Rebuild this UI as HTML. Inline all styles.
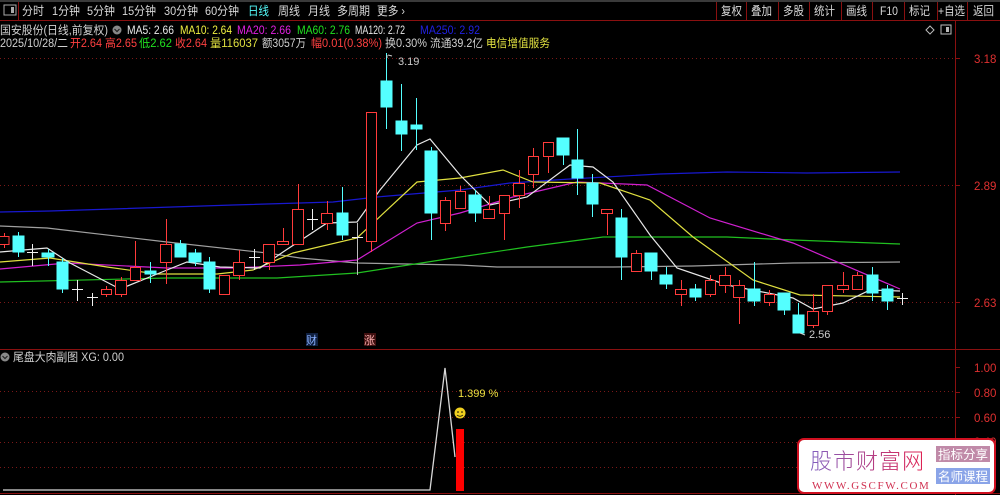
<!DOCTYPE html>
<html><head><meta charset="utf-8"><style>
html,body{margin:0;padding:0;background:#000;width:1000px;height:495px;overflow:hidden;font-family:"Liberation Sans","Noto Sans CJK SC",sans-serif}
</style></head><body>
<div style="position:absolute;left:0;top:0;width:1000px;height:495px">
<svg width="1000" height="495" style="position:absolute;left:0;top:0" font-family="Liberation Sans, Noto Sans CJK SC, sans-serif">
<!-- toolbar -->
<rect x="0" y="0" width="1000" height="2" fill="#3a3a3a"/>
<line x1="0" y1="20.5" x2="1000" y2="20.5" stroke="#8a1010"/>
<rect x="4" y="5" width="12" height="10" fill="none" stroke="#aaa"/><rect x="11" y="7" width="3" height="6" fill="#aaa"/>
<line x1="18.5" y1="2" x2="18.5" y2="20" stroke="#8a1010"/>
<g font-size="12" fill="#d8d8d8" lengthAdjust="spacingAndGlyphs">
<text x="22" y="15" textLength="22" lengthAdjust="spacingAndGlyphs">分时</text><text x="52" y="15" textLength="28" lengthAdjust="spacingAndGlyphs">1分钟</text><text x="87" y="15" textLength="28" lengthAdjust="spacingAndGlyphs">5分钟</text><text x="122" y="15" textLength="34" lengthAdjust="spacingAndGlyphs">15分钟</text><text x="164" y="15" textLength="34" lengthAdjust="spacingAndGlyphs">30分钟</text><text x="205" y="15" textLength="34" lengthAdjust="spacingAndGlyphs">60分钟</text><text x="248" y="15" fill="#5ff" textLength="21" lengthAdjust="spacingAndGlyphs">日线</text><text x="278" y="15" textLength="22" lengthAdjust="spacingAndGlyphs">周线</text><text x="308" y="15" textLength="22" lengthAdjust="spacingAndGlyphs">月线</text><text x="337" y="15" textLength="33" lengthAdjust="spacingAndGlyphs">多周期</text><text x="377" y="15" textLength="28" lengthAdjust="spacingAndGlyphs">更多 ›</text>
<text x="721" y="15" textLength="21" lengthAdjust="spacingAndGlyphs">复权</text><text x="751" y="15" textLength="21" lengthAdjust="spacingAndGlyphs">叠加</text><text x="783" y="15" textLength="21" lengthAdjust="spacingAndGlyphs">多股</text><text x="814" y="15" textLength="21" lengthAdjust="spacingAndGlyphs">统计</text><text x="846" y="15" textLength="21" lengthAdjust="spacingAndGlyphs">画线</text><text x="880" y="15" textLength="18" lengthAdjust="spacingAndGlyphs">F10</text><text x="909" y="15" textLength="21" lengthAdjust="spacingAndGlyphs">标记</text><text x="938" y="15" textLength="27" lengthAdjust="spacingAndGlyphs">+自选</text><text x="973" y="15" textLength="21" lengthAdjust="spacingAndGlyphs">返回</text>
</g>
<g stroke="#8a1010"><line x1="716.5" y1="2" x2="716.5" y2="20"/><line x1="746.5" y1="2" x2="746.5" y2="20"/><line x1="778.5" y1="2" x2="778.5" y2="20"/><line x1="809.5" y1="2" x2="809.5" y2="20"/><line x1="841.5" y1="2" x2="841.5" y2="20"/><line x1="872.5" y1="2" x2="872.5" y2="20"/><line x1="904.5" y1="2" x2="904.5" y2="20"/><line x1="937.5" y1="2" x2="937.5" y2="20"/><line x1="967.5" y1="2" x2="967.5" y2="20"/></g>
<!-- header -->
<g font-size="11.5">
<text x="0" y="34" fill="#d0d0d0" textLength="108" lengthAdjust="spacingAndGlyphs">国安股份(日线,前复权)</text>
<circle cx="117" cy="30" r="4.5" fill="#888"/><path d="M114.5 29 L117 31.5 L119.5 29" stroke="#222" fill="none" stroke-width="1.2"/>
<text x="127" y="34" fill="#e8e8e8" textLength="47" lengthAdjust="spacingAndGlyphs">MA5: 2.66</text><text x="180" y="34" fill="#f0f040" textLength="52" lengthAdjust="spacingAndGlyphs">MA10: 2.64</text><text x="237" y="34" fill="#e020e0" textLength="54" lengthAdjust="spacingAndGlyphs">MA20: 2.66</text><text x="297" y="34" fill="#20e020" textLength="53" lengthAdjust="spacingAndGlyphs">MA60: 2.76</text><text x="355" y="34" fill="#e8e8e8" textLength="50" lengthAdjust="spacingAndGlyphs">MA120: 2.72</text><text x="420" y="34" fill="#2020e0" textLength="60" lengthAdjust="spacingAndGlyphs">MA250: 2.92</text>
<text x="0" y="47" fill="#d0d0d0" textLength="68" lengthAdjust="spacingAndGlyphs">2025/10/28/二</text>
<text x="70" y="47" fill="#ff4040" textLength="32" lengthAdjust="spacingAndGlyphs">开2.64</text><text x="105" y="47" fill="#ff4040" textLength="32" lengthAdjust="spacingAndGlyphs">高2.65</text><text x="139" y="47" fill="#20e020" textLength="33" lengthAdjust="spacingAndGlyphs">低2.62</text><text x="175" y="47" fill="#ff4040" textLength="32" lengthAdjust="spacingAndGlyphs">收2.64</text><text x="210" y="47" fill="#e0e040" textLength="48" lengthAdjust="spacingAndGlyphs">量116037</text><text x="262" y="47" fill="#d0d0d0" textLength="44" lengthAdjust="spacingAndGlyphs">额3057万</text><text x="311" y="47" fill="#ff4040" textLength="71" lengthAdjust="spacingAndGlyphs">幅0.01(0.38%)</text><text x="385" y="47" fill="#d0d0d0" textLength="42" lengthAdjust="spacingAndGlyphs">换0.30%</text><text x="430" y="47" fill="#d0d0d0" textLength="53" lengthAdjust="spacingAndGlyphs">流通39.2亿</text><text x="486" y="47" fill="#e0e040" textLength="64" lengthAdjust="spacingAndGlyphs">电信增值服务</text>
</g>
<path d="M926 30 L930 26 L934 30 L930 34 Z" fill="none" stroke="#bbb"/>
<rect x="941" y="25" width="10" height="9" fill="none" stroke="#bbb"/><rect x="946" y="27" width="3" height="5" fill="#bbb"/>
<!-- axes -->
<line x1="955.5" y1="21" x2="955.5" y2="495" stroke="#8a1010"/>
<line x1="0" y1="349.5" x2="1000" y2="349.5" stroke="#8a1010"/>
<g stroke="#7a1818" stroke-dasharray="1,3">
<line x1="0" y1="58.5" x2="955" y2="58.5"/><line x1="0" y1="185.5" x2="955" y2="185.5"/><line x1="0" y1="302.5" x2="955" y2="302.5"/>
<line x1="0" y1="391.5" x2="955" y2="391.5"/><line x1="0" y1="417.5" x2="955" y2="417.5"/><line x1="0" y1="442.5" x2="955" y2="442.5"/><line x1="0" y1="467.5" x2="955" y2="467.5"/>
</g>
<g stroke="#8a1010"><line x1="955" y1="58.5" x2="960" y2="58.5"/><line x1="955" y1="185.5" x2="960" y2="185.5"/><line x1="955" y1="302.5" x2="960" y2="302.5"/><line x1="955" y1="367.5" x2="960" y2="367.5"/><line x1="955" y1="392.5" x2="960" y2="392.5"/><line x1="955" y1="417.5" x2="960" y2="417.5"/><line x1="955" y1="441.5" x2="960" y2="441.5"/></g>
<g font-size="11.5" fill="#e03030"><text x="974" y="63">3.18</text><text x="974" y="190">2.89</text><text x="974" y="307">2.63</text><text x="974" y="372">1.00</text><text x="974" y="397">0.80</text><text x="974" y="422">0.60</text><text x="974" y="446">0.40</text></g>
<!-- MAs -->
<g fill="none" stroke-width="1.2">
<polyline stroke="#1818d0" points="0,212 50,211 113,209 233,205 333,202 377,197 460,190 510,183 570,179 660,174 727,172 807,173 900,172"/>
<polyline stroke="#a0a0a0" points="0,226 47,228 167,242 267,253 300,258 357,263 460,265 497,267 613,267 693,266 793,263 900,262"/>
<polyline stroke="#20c020" points="0,282 167,278 277,278 357,273 460,257 527,247 603,237 727,237 793,240 900,244"/>
<polyline stroke="#d020d0" points="0,269 67,263 167,268 233,268 300,265 357,260 417,223 460,213 513,197 577,182 647,185 710,218 793,243 900,289"/>
<polyline stroke="#e0e040" points="0,262 50,258 107,267 157,274 217,274 253,270 293,253 357,238 417,182 460,178 503,170 533,182 600,183 650,200 693,237 753,280 800,295 900,297"/>
<polyline stroke="#e8e8e8" points="0,252 47,248 70,263 120,289 167,270 187,262 220,267 260,268 283,252 327,223 357,222 380,190 417,145 430,139 460,175 490,205 527,197 570,165 593,167 613,182 650,235 677,268 727,285 793,298 813,309 843,303 870,290 900,291"/>
</g>
<!-- candles -->
<g stroke="#ff3b3b" fill="#000">
<line x1="4.5" y1="233" x2="4.5" y2="248"/><rect x="-1" y="236.5" width="10" height="8"/>
<line x1="106.5" y1="286" x2="106.5" y2="297"/><rect x="101.5" y="289.5" width="10" height="5"/>
<line x1="121.5" y1="277" x2="121.5" y2="297"/><rect x="115.5" y="280.5" width="11" height="14"/>
<line x1="135.5" y1="241" x2="135.5" y2="280"/><rect x="130.5" y="267.5" width="10" height="13"/>
<line x1="166.5" y1="219" x2="166.5" y2="284"/><rect x="160.5" y="244.5" width="11" height="18"/>
<rect x="219.5" y="275.5" width="10" height="19"/>
<line x1="239.5" y1="250" x2="239.5" y2="280"/><rect x="233.5" y="262.5" width="11" height="13"/>
<line x1="269.5" y1="244" x2="269.5" y2="270"/><rect x="263.5" y="244.5" width="11" height="18"/>
<line x1="283.5" y1="228" x2="283.5" y2="244"/><rect x="277.5" y="241.5" width="11" height="3"/>
<line x1="298.5" y1="184" x2="298.5" y2="244"/><rect x="292.5" y="209.5" width="11" height="35"/>
<line x1="327.5" y1="201" x2="327.5" y2="230"/><rect x="321.5" y="213.5" width="11" height="10"/>
<line x1="371.5" y1="112" x2="371.5" y2="252"/><rect x="366.5" y="112.5" width="10" height="129"/>
<line x1="445.5" y1="197" x2="445.5" y2="231"/><rect x="440.5" y="200.5" width="10" height="23"/>
<line x1="460.5" y1="186" x2="460.5" y2="208"/><rect x="455.5" y="191.5" width="10" height="17"/>
<line x1="489.5" y1="196" x2="489.5" y2="218"/><rect x="483.5" y="209.5" width="11" height="9"/>
<line x1="504.5" y1="195" x2="504.5" y2="240"/><rect x="499.5" y="195.5" width="10" height="18"/>
<line x1="519.5" y1="170" x2="519.5" y2="208"/><rect x="513.5" y="183.5" width="11" height="12"/>
<line x1="533.5" y1="148" x2="533.5" y2="188"/><rect x="528.5" y="156.5" width="10" height="18"/>
<line x1="548.5" y1="142" x2="548.5" y2="173"/><rect x="543.5" y="142.5" width="10" height="14"/>
<line x1="607.5" y1="209" x2="607.5" y2="235"/><rect x="601.5" y="209.5" width="11" height="4"/>
<line x1="636.5" y1="250" x2="636.5" y2="271"/><rect x="631.5" y="253.5" width="10" height="18"/>
<line x1="681.5" y1="280" x2="681.5" y2="306"/><rect x="675.5" y="289.5" width="11" height="5"/>
<line x1="710.5" y1="275" x2="710.5" y2="297"/><rect x="705.5" y="280.5" width="10" height="14"/>
<line x1="725.5" y1="267" x2="725.5" y2="293"/><rect x="719.5" y="275.5" width="11" height="10"/>
<line x1="739.5" y1="280" x2="739.5" y2="324"/><rect x="733.5" y="285.5" width="11" height="12"/>
<line x1="769.5" y1="290" x2="769.5" y2="306"/><rect x="764.5" y="294.5" width="10" height="8"/>
<line x1="813.5" y1="294" x2="813.5" y2="328"/><rect x="807.5" y="311.5" width="11" height="14"/>
<line x1="827.5" y1="285" x2="827.5" y2="315"/><rect x="822.5" y="285.5" width="10" height="26"/>
<line x1="843.5" y1="272" x2="843.5" y2="293"/><rect x="837.5" y="285.5" width="11" height="4"/>
<line x1="857.5" y1="272" x2="857.5" y2="289"/><rect x="852.5" y="275.5" width="10" height="14"/>
</g>
<g stroke="#54ffff" fill="#54ffff">
<line x1="18.5" y1="232" x2="18.5" y2="257"/><rect x="13" y="236" width="11" height="16"/>
<line x1="48.5" y1="249" x2="48.5" y2="266"/><rect x="42" y="253" width="12" height="4"/>
<line x1="62.5" y1="258" x2="62.5" y2="293"/><rect x="57" y="262" width="11" height="27"/>
<line x1="150.5" y1="262" x2="150.5" y2="283"/><rect x="145" y="271" width="11" height="3"/>
<line x1="180.5" y1="240" x2="180.5" y2="257"/><rect x="175" y="244" width="11" height="13"/>
<line x1="195.5" y1="249" x2="195.5" y2="266"/><rect x="189" y="253" width="12" height="9"/>
<line x1="209.5" y1="257" x2="209.5" y2="293"/><rect x="204" y="262" width="11" height="27"/>
<line x1="342.5" y1="187" x2="342.5" y2="240"/><rect x="337" y="213" width="11" height="22"/>
<line x1="386.5" y1="53" x2="386.5" y2="129"/><rect x="381" y="81" width="11" height="26"/>
<line x1="401.5" y1="84" x2="401.5" y2="151"/><rect x="396" y="121" width="11" height="13"/>
<line x1="416.5" y1="98" x2="416.5" y2="150"/><rect x="411" y="125" width="11" height="4"/>
<line x1="431.5" y1="147" x2="431.5" y2="240"/><rect x="425" y="151" width="12" height="62"/>
<line x1="475.5" y1="190" x2="475.5" y2="222"/><rect x="469" y="195" width="12" height="18"/>
<line x1="563.5" y1="138" x2="563.5" y2="165"/><rect x="557" y="138" width="12" height="17"/>
<line x1="577.5" y1="129" x2="577.5" y2="195"/><rect x="572" y="160" width="11" height="18"/>
<line x1="592.5" y1="174" x2="592.5" y2="217"/><rect x="587" y="183" width="11" height="21"/>
<line x1="621.5" y1="209" x2="621.5" y2="280"/><rect x="616" y="218" width="11" height="39"/>
<line x1="651.5" y1="253" x2="651.5" y2="280"/><rect x="645" y="253" width="12" height="18"/>
<line x1="666.5" y1="267" x2="666.5" y2="289"/><rect x="660" y="275" width="12" height="9"/>
<line x1="695.5" y1="284" x2="695.5" y2="301"/><rect x="690" y="289" width="11" height="8"/>
<line x1="754.5" y1="262" x2="754.5" y2="306"/><rect x="748" y="289" width="12" height="12"/>
<line x1="784.5" y1="293" x2="784.5" y2="315"/><rect x="778" y="293" width="12" height="17"/>
<line x1="798.5" y1="303" x2="798.5" y2="333"/><rect x="793" y="315" width="11" height="18"/>
<line x1="872.5" y1="267" x2="872.5" y2="301"/><rect x="867" y="275" width="11" height="18"/>
<line x1="887.5" y1="285" x2="887.5" y2="310"/><rect x="882" y="289" width="11" height="12"/>
</g>
<g stroke="#f0f0f0">
<line x1="32.5" y1="244" x2="32.5" y2="266"/><line x1="27" y1="252.5" x2="38" y2="252.5"/>
<line x1="77.5" y1="280" x2="77.5" y2="301"/><line x1="72" y1="289.5" x2="83" y2="289.5"/>
<line x1="92.5" y1="293" x2="92.5" y2="306"/><line x1="87" y1="297.5" x2="98" y2="297.5"/>
<line x1="254.5" y1="249" x2="254.5" y2="270"/><line x1="249" y1="257.5" x2="260" y2="257.5"/>
<line x1="312.5" y1="209" x2="312.5" y2="230"/><line x1="307" y1="219.5" x2="318" y2="219.5"/>
<line x1="357.5" y1="223" x2="357.5" y2="275" stroke="#bbb"/><line x1="352" y1="237.5" x2="363" y2="237.5"/>
<line x1="902.5" y1="293" x2="902.5" y2="305"/><line x1="897" y1="298.5" x2="908" y2="298.5"/>
</g>
<path d="M387 55 L387 58 M388 55 L392 56" stroke="#ccc" fill="none"/>
<text x="398" y="65" font-size="11" fill="#ccc">3.19</text>
<path d="M800 333 L805 335" stroke="#ccc"/>
<text x="809" y="338" font-size="11" fill="#ccc">2.56</text>
<rect x="306" y="333" width="12" height="13" fill="#102040"/><text x="306" y="344" font-size="11" fill="#8ab0ff">财</text>
<rect x="364" y="333" width="12" height="13" fill="#401010"/><text x="364" y="344" font-size="11" fill="#ffb0b0">涨</text>
<!-- sub chart -->
<circle cx="5" cy="357" r="4.5" fill="#888"/><path d="M2.5 356 L5 358.5 L7.5 356" stroke="#222" fill="none" stroke-width="1.2"/>
<text x="13" y="361" font-size="11.5" fill="#d0d0d0" textLength="111" lengthAdjust="spacingAndGlyphs">尾盘大肉副图 XG: 0.00</text>
<polyline points="3,490 430,490 445,368 455,457" fill="none" stroke="#d8d8d8" stroke-width="1.3"/>
<rect x="456" y="429" width="8" height="62" fill="#ff0000"/>
<text x="458" y="397" font-size="11" fill="#f0e040">1.399 %</text>
<circle cx="460" cy="413" r="5.5" fill="#f0d020"/><circle cx="458" cy="412" r="0.8" fill="#000"/><circle cx="462" cy="412" r="0.8" fill="#000"/><path d="M457 415 Q460 417.5 463 415" stroke="#000" fill="none" stroke-width="0.8"/>
<line x1="0" y1="493.5" x2="1000" y2="493.5" stroke="#8a1010"/>
<!-- watermark -->
<rect x="798" y="439" width="197" height="54" rx="6" fill="#fff" stroke="#d01020" stroke-width="2"/>
<defs><linearGradient id="g" x1="0" x2="1"><stop offset="0" stop-color="#8060c0"/><stop offset="1" stop-color="#e02050"/></linearGradient></defs>
<text x="810" y="469" font-size="22" fill="url(#g)" font-family="Noto Sans CJK SC, sans-serif" font-weight="300" letter-spacing="1">股市财富网</text>
<text x="812" y="489" font-size="11" fill="#d03050" font-family="Liberation Serif, serif" letter-spacing="1.6">WWW.GSCFW.COM</text>
<rect x="936" y="446" width="54" height="16" fill="#c08aa8"/><text x="938" y="459" font-size="12.5" fill="#fff">指标分享</text>
<rect x="936" y="468" width="54" height="16" fill="#8aa4e8"/><text x="938" y="481" font-size="12.5" fill="#fff">名师课程</text>
</svg>
</div>
</body></html>
